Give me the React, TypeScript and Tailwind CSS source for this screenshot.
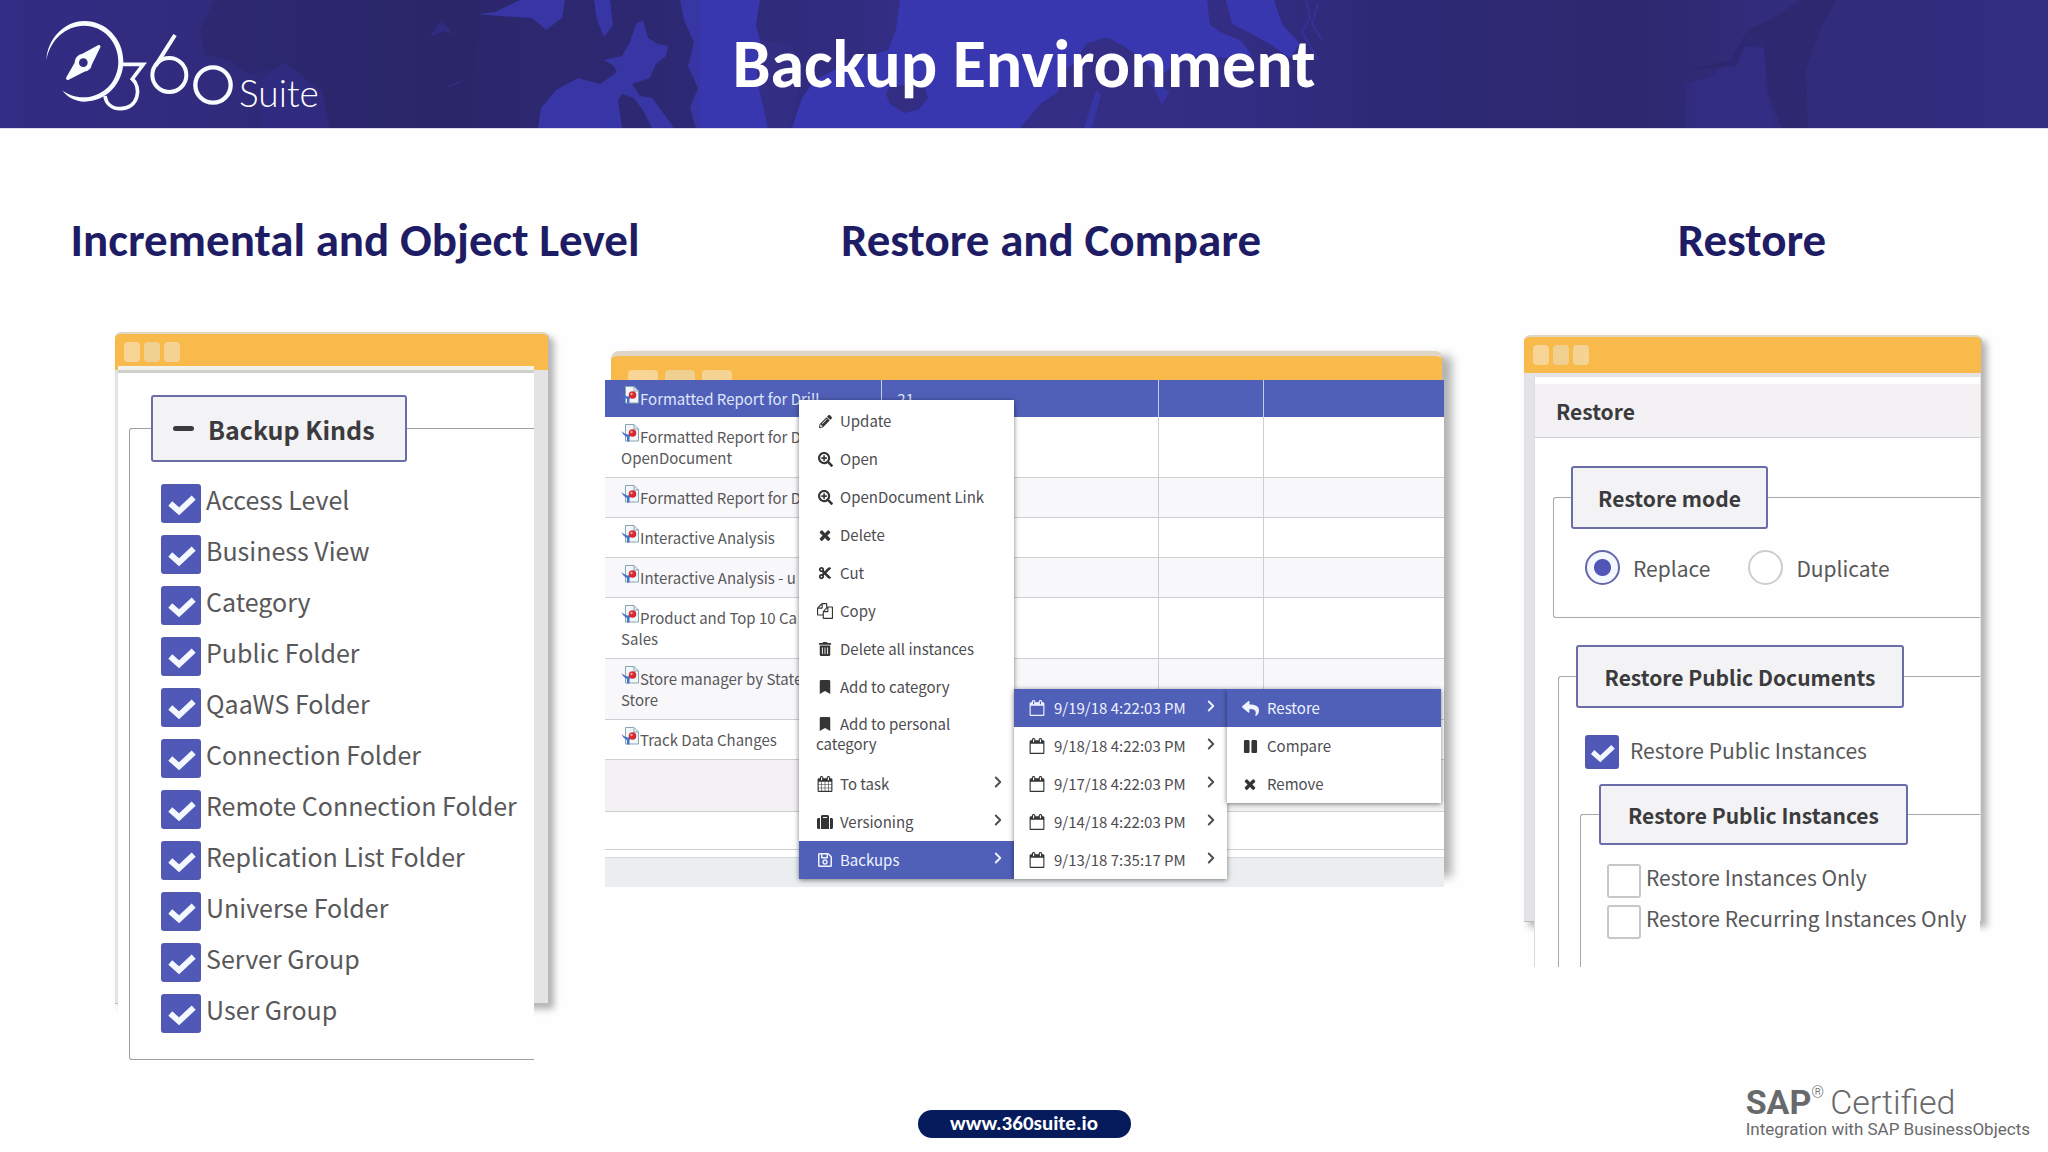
import type { ReactNode } from 'react';
import { ChevronRight } from 'lucide-react';
import { FaBookmark, FaCut, FaPause, FaPencilAlt, FaRegSave, FaReply, FaSearchPlus, FaSuitcase, FaTrashAlt } from 'react-icons/fa';

const backupKinds = [
  'Access Level',
  'Business View',
  'Category',
  'Public Folder',
  'QaaWS Folder',
  'Connection Folder',
  'Remote Connection Folder',
  'Replication List Folder',
  'Universe Folder',
  'Server Group',
  'User Group',
];

const reports = [
  ['Formatted Report for Drill', 'OpenDocument'],
  ['Formatted Report for Drill'],
  ['Interactive Analysis'],
  ['Interactive Analysis - u'],
  ['Product and Top 10 Ca', 'Sales'],
  ['Store manager by State', 'Store'],
  ['Track Data Changes'],
];

const backups = ['9/19/18 4:22:03 PM', '9/18/18 4:22:03 PM', '9/17/18 4:22:03 PM', '9/14/18 4:22:03 PM', '9/13/18 7:35:17 PM'];

function Glyph({ d }: { d: string }) {
  return (
    <svg className="h-4 w-4" viewBox="0 0 1792 1792" fill="currentColor">
      <path d={d} />
    </svg>
  );
}

const TimesIcon = () => (
  <Glyph d="M1490 1322q0 40-28 68l-136 136q-28 28-68 28t-68-28l-294-294-294 294q-28 28-68 28t-68-28l-136-136q-28-28-28-68t28-68l294-294-294-294q-28-28-28-68t28-68l136-136q28-28 68-28t68 28l294 294 294-294q28-28 68-28t68 28l136 136q28 28 28 68t-28 68l-294 294 294 294q28 28 28 68z" />
);

const CopyIcon = () => (
  <Glyph d="M1696 384q40 0 68 28t28 68v1216q0 40-28 68t-68 28h-960q-40 0-68-28t-28-68v-288h-544q-40 0-68-28t-28-68v-672q0-40 20-88t48-76l408-408q28-28 76-48t88-20h416q40 0 68 28t28 68v328q68-40 128-40h416zm-544 213l-299 299h299v-299zm-640-384l-299 299h299v-299zm196 647l316-316v-416h-384v416q0 40-28 68t-68 28h-416v640h512v-256q0-40 20-88t48-76zm956 804v-1152h-384v416q0 40-28 68t-68 28h-416v640h896z" />
);

const CalendarIcon = () => (
  <Glyph d="M192 1664h1408v-1024h-1408v1024zm384-1216v-288q0-14-9-23t-23-9h-64q-14 0-23 9t-9 23v288q0 14 9 23t23 9h64q14 0 23-9t9-23zm768 0v-288q0-14-9-23t-23-9h-64q-14 0-23 9t-9 23v288q0 14 9 23t23 9h64q14 0 23-9t9-23zm384-64v1280q0 52-38 90t-90 38h-1408q-52 0-90-38t-38-90v-1280q0-52 38-90t90-38h128v-96q0-66 47-113t113-47h64q66 0 113 47t47 113v96h384v-96q0-66 47-113t113-47h64q66 0 113 47t47 113v96h128q52 0 90 38t38 90z" />
);

const CalendarGridIcon = () => (
  <Glyph d="M192 1664h288v-288h-288v288zm352 0h320v-288h-320v288zm-352-352h288v-320h-288v320zm352 0h320v-320h-320v320zm-352-384h288v-288h-288v288zm736 736h320v-288h-320v288zm-384-736h320v-288h-320v288zm768 736h288v-288h-288v288zm-384-352h320v-320h-320v320zm-352-864v-288q0-13-9.5-22.5t-22.5-9.5h-64q-13 0-22.5 9.5t-9.5 22.5v288q0 13 9.5 22.5t22.5 9.5h64q13 0 22.5-9.5t9.5-22.5zm736 864h288v-320h-288v320zm-384-384h320v-288h-320v288zm384 0h288v-288h-288v288zm32-480v-288q0-13-9.5-22.5t-22.5-9.5h-64q-13 0-22.5 9.5t-9.5 22.5v288q0 13 9.5 22.5t22.5 9.5h64q13 0 22.5-9.5t9.5-22.5zm384-64v1280q0 52-38 90t-90 38h-1408q-52 0-90-38t-38-90v-1280q0-52 38-90t90-38h128v-96q0-66 47-113t113-47h64q66 0 113 47t47 113v96h384v-96q0-66 47-113t113-47h64q66 0 113 47t47 113v96h128q52 0 90 38t38 90z" />
);

function ReportIcon() {
  return (
    <svg className="-mt-1 inline-block h-[18px] w-[19px] align-[1px]" viewBox="0 0 19 18">
      <path d="M4.500 0.500h8.500l4.500 4.500v12h-13z" fill="#f1f6fb" stroke="#8aa5b2" />
      <path d="M13 0.500v4.500h4.500" fill="none" stroke="#8aa5b2" />
      <path d="M0.500 7c3 3 6 4 10 3l-2 3v4.500H6V13C3.500 12 1.500 10 0.500 7z" fill="#4472cf" />
      <circle cx="11.500" cy="9" r="3.800" fill="#d42a30" />
      <circle cx="10.500" cy="8" r="1.200" fill="#f3a09c" />
    </svg>
  );
}

function Logo() {
  return (
    <div className="flex items-end gap-1 pl-[30px]" role="img" aria-label="360Suite">
      <svg className="h-[110px] w-[205px]" viewBox="0 0 615 330" fill="none" stroke="#f8fcff">
        <path d="M49 154C52 88 104 36 163 36c65 0 117 54 117 121s-52 121-117 121c-26 0-52-13-66-34 18 14 38 21 62 21 61 0 106-48 106-107S221 50 162 50C108 50 60 92 49 154z" fill="#f8fcff" stroke="none" />
        <path d="M204 109c5-3 9 1 7 6l-26 53c-2 12-10 18-22 20l-47 24c-6 3-9-2-7-7l25-44c1-16 10-24 23-27z" fill="#f8fcff" stroke="none" />
        <circle cx="160" cy="161" r="13" fill="#312c80" stroke="none" />
        <path d="M276 166h64l-33 44c28 24 20 89-36 89-28 0-43-17-46-38" strokeWidth="11" />
        <path d="M435 78l-58 92" strokeWidth="12" />
        <circle cx="418" cy="198" r="51" strokeWidth="12" />
        <circle cx="549" cy="228" r="53" strokeWidth="13" />
      </svg>
      <span className="pb-2 font-[Lato,sans-serif] text-[37px] leading-[37px] font-light">Suite</span>
    </div>
  );
}

function WorldMap() {
  return (
    <svg className="absolute inset-0 h-full w-full" viewBox="0 0 2048 128" preserveAspectRatio="none" aria-hidden="true">
      <defs>
        <linearGradient id="sea" x1="0" x2="1" y1="0" y2="0">
          <stop offset="0" stopColor="#322d84" />
          <stop offset="0.100" stopColor="#302b7c" />
          <stop offset="0.220" stopColor="#2c276c" />
          <stop offset="0.320" stopColor="#2d2872" />
          <stop offset="0.450" stopColor="#342e86" />
          <stop offset="0.600" stopColor="#332d84" />
          <stop offset="0.680" stopColor="#2e2975" />
          <stop offset="0.800" stopColor="#2d286e" />
          <stop offset="0.860" stopColor="#322c7c" />
          <stop offset="1" stopColor="#332d80" />
        </linearGradient>
      </defs>
      <path fill="url(#sea)" d="M0 0H2048V128H0z" />
      <path fill="#2a2566" opacity="0.500" d="M215 0L200 30L205 55L230 60L250 75L270 68L300 85L325 128H470L480 0z" />
      <path fill="#322d88" opacity="0.600" d="M262 80L285 62L300 75L322 90L330 128H262z" />
      <g fill="#3836a4">
        <path d="M478 14L495 12L520 0H565L562 18L546 30L532 18L500 16z" />
        <path opacity="0.400" d="M430 37L441 20L453 34L444 31zM438 90L462 80L458 84z" />
        <path d="M594 0H610L613 25L604 37L597 20z" />
        <path d="M636 24L643 20L648 38L658 44L668 46L666 56L656 64L650 78L632 84L640 96L652 98L664 114L674 128H652L644 112L634 98L622 94L618 100L622 128H538L541 108L556 90L578 78L600 84L617 72L614 66L604 60L622 56L630 42z" />
        <path d="M680 0H702V128H696L690 108L698 88L688 66L694 42L684 20z" />
      </g>
      <g fill="#3937b0">
        <path d="M700 0H760L756 25L762 48L757 75L764 100L768 128H700z" />
        <path d="M900 0H1207L1210 25L1222 33L1240 40L1252 55L1230 58L1200 56L1182 60L1160 76L1146 62L1124 46L1106 37L1086 44L1076 62L1062 72L1058 92L1040 104L1020 128H792L802 98L815 80L850 62L888 50L896 30z" />
        <path d="M1226 0H1274L1282 24L1300 44L1290 58L1270 44L1252 34L1232 24z" />
        <path opacity="0.700" d="M1096 90L1101 94L1092 128H1084zM1148 78L1170 92L1162 104z" />
      </g>
      <path fill="#332d84" d="M760 40L790 44L800 60L798 96L788 128H768L757 80zM890 86L924 84L928 98L918 110L904 113L890 104L886 94z" />
      <path fill="none" stroke="#3836a0" strokeWidth="2" opacity="0.700" d="M1306 0L1310 18L1302 32L1318 60M1318 4L1312 24L1322 40" />
      <path fill="#332e88" opacity="0.700" d="M1685 128L1686 84L1712 76L1738 50L1748 34L1764 40L1766 92L1776 128z" />
      <path fill="#28235f" opacity="0.400" d="M1690 70L1730 60L1748 30L1770 20L1800 0H1836L1820 30L1806 70L1808 128H1782L1768 92L1764 48L1745 46L1736 66z" />
    </svg>
  );
}

// browser chrome drawn behind each capture
function WindowFrame({ className, dots }: { className: string; dots: string }) {
  return (
    <div className={`[grid-area:1/1] overflow-hidden rounded-t-[6px] border-t-2 border-r border-b border-[#bdb9b4] border-t-[#dfd6c6] bg-[#e3e2e4] ${className}`}>
      <div className="flex h-9 items-center bg-[#f8ba4b]">
        <div className={dots}>
          <span className="rounded-[4px] bg-[#f8d596]" />
          <span className="rounded-[4px] bg-[#f0d090]" />
          <span className="rounded-[4px] bg-[#f5d395]" />
        </div>
      </div>
    </div>
  );
}

const smallDots = 'grid auto-cols-[16px] grid-flow-col grid-rows-[20px] gap-1 pl-[9px]';

function CheckRow({ label, checked, className, box }: { label: string; checked?: boolean; className: string; box: string }) {
  return (
    <label className={`flex items-center ${className}`}>
      <span className={`grid shrink-0 ${box}`}>
        <input
          type="checkbox"
          defaultChecked={checked}
          className="peer [grid-area:1/1] h-full w-full appearance-none rounded-[3px] border-2 border-[#c9c7c6] bg-white checked:border-[#5058b0] checked:bg-[#5159b8]"
        />
        <svg className="pointer-events-none invisible [grid-area:1/1] h-full w-full peer-checked:visible" viewBox="0 0 40 40" fill="none" stroke="#f4f9ff" strokeWidth="6">
          <polyline points="9,20 18,28 33,14" />
        </svg>
      </span>
      <span className="whitespace-nowrap">{label}</span>
    </label>
  );
}

const legendBox = 'flex items-center rounded-[3px] border-2 border-[#6a6da8] bg-[#f3f2f4] font-bold whitespace-nowrap text-[#3b3b3d]';

function BackupKindsPanel() {
  return (
    <section className="grid">
      <WindowFrame className="mb-[56px] shadow-[5px_5px_7px_rgba(0,0,0,0.3)]" dots={smallDots} />
      <div className="[grid-area:1/1] mt-[34px] mr-[15px] ml-[3px] overflow-hidden bg-[#fefefe]">
        <div className="h-[7px] border-b-[3px] border-[#cdd0cb] bg-[#f3f1ec]" />
        <fieldset className="mt-[22px] ml-[11px] rounded-l-[3px] border border-r-0 border-[#a0a0a0] pb-[26px] pl-[21px] text-[25px] leading-[28px] text-[#58585a]">
          <legend className={`${legendBox} h-[67px] w-[256px] gap-[14px] pl-5`}>
            <span className="h-[5px] w-[21px] rounded-sm bg-[#3b3b3d]" />
            Backup Kinds
          </legend>
          <div className="mt-[22px] ml-[10px] flex flex-col gap-3">
            {backupKinds.map((kind) => (
              <CheckRow key={kind} label={kind} checked box="h-[39px] w-[40px]" className="gap-[5px] [&>span+span]:pb-2.5" />
            ))}
          </div>
        </fieldset>
      </div>
    </section>
  );
}

function MenuItem({ icon, children, arrow, active }: { icon: ReactNode; children: ReactNode; arrow?: boolean; active?: boolean }) {
  return (
    <li>
      <button
        type="button"
        className={`flex h-[38px] w-full items-center whitespace-nowrap ${active ? 'bg-[#5060b8] text-[#eef2ff]' : ''}`}
      >
        <span className={`flex w-[18px] shrink-0 justify-center ${active ? '' : 'text-[#353537]'}`}>{icon}</span>
        <span>{children}</span>
        {arrow && <ChevronRight className="mr-[7px] mb-1 ml-auto h-[18px] w-[18px]" strokeWidth={2.5} />}
      </button>
    </li>
  );
}

function ContextMenu() {
  return (
    <div className="absolute top-[49px] left-[194px] flex items-end text-[15px] leading-5 text-[#4d4d50]">
      <ul className="w-[215px] bg-white pt-0.5 shadow-[0_1px_5px_rgba(0,0,0,0.5)] [&_button]:gap-1.5 [&_button]:pl-[17px]">
        <MenuItem icon={<FaPencilAlt size={13} />}>Update</MenuItem>
        <MenuItem icon={<FaSearchPlus size={15} />}>Open</MenuItem>
        <MenuItem icon={<FaSearchPlus size={15} />}>OpenDocument Link</MenuItem>
        <MenuItem icon={<TimesIcon />}>Delete</MenuItem>
        <MenuItem icon={<FaCut size={14} />}>Cut</MenuItem>
        <MenuItem icon={<CopyIcon />}>Copy</MenuItem>
        <MenuItem icon={<FaTrashAlt size={14} />}>Delete all instances</MenuItem>
        <MenuItem icon={<FaBookmark size={14} />}>Add to category</MenuItem>
        <li>
          <button type="button" className="h-[59px] w-full pb-1 text-left">
            <span className="flex items-center gap-1.5">
              <span className="flex w-[18px] justify-center text-[#353537]">
                <FaBookmark size={14} />
              </span>
              Add to personal
            </span>
            category
          </button>
        </li>
        <MenuItem icon={<CalendarGridIcon />} arrow>To task</MenuItem>
        <MenuItem icon={<FaSuitcase size={16} />} arrow>Versioning</MenuItem>
        <MenuItem icon={<FaRegSave size={16} />} arrow active>Backups</MenuItem>
      </ul>
      <div className="flex items-start [&_button]:gap-2 [&_button]:pl-[14px]">
        <ul className="w-[213px] bg-white shadow-[0_1px_5px_rgba(0,0,0,0.5)]">
          {backups.map((date, i) => (
            <MenuItem key={date} icon={<CalendarIcon />} arrow active={i === 0}>
              {date}
            </MenuItem>
          ))}
        </ul>
        <ul className="w-[214px] bg-white shadow-[0_1px_5px_rgba(0,0,0,0.5)]">
          <MenuItem icon={<FaReply size={17} />} active>Restore</MenuItem>
          <MenuItem icon={<FaPause size={15} />}>Compare</MenuItem>
          <MenuItem icon={<TimesIcon />}>Remove</MenuItem>
        </ul>
      </div>
    </div>
  );
}

function ComparePanel() {
  return (
    <section className="relative mt-[19px] grid self-start">
      <WindowFrame
        className="mr-px mb-[9px] ml-[6px] rounded-t-[8px] border-t-[5px] border-t-[#ddd3c8] shadow-[12px_2px_10px_-3px_rgba(0,0,0,0.3)]"
        dots="mt-3 grid auto-cols-[30px] grid-flow-col grid-rows-[20px] gap-[7px] pl-[17px]"
      />
      <div className="[grid-area:1/1] mt-[29px] bg-white">
        <table className="w-full table-fixed border-collapse text-left align-top text-[15px] leading-[21px] text-[#58585a]">
          <colgroup>
            <col className="w-[33%]" />
            <col className="w-[33%]" />
            <col className="w-[12.5%]" />
            <col />
          </colgroup>
          <thead>
            <tr className="h-[37px] bg-[#5060b8] text-[#dfe6fb] [&>*+*]:border-l [&>*+*]:border-[#c3cbee]">
              <th className="pl-4 font-normal whitespace-nowrap">
                <ReportIcon />
                Formatted Report for Drill
              </th>
              <th className="pl-[15px] font-normal">21</th>
              <td />
              <td />
            </tr>
          </thead>
          <tbody>
            {reports.map((lines, i) => (
              <tr key={i} className="border-b border-[#cfced1] even:bg-[#f8f7fa] [&>td+td]:border-l [&>td+td]:border-[#cfced1]">
                <td className="pt-[9px] pb-[9px] pl-4 whitespace-nowrap">
                  <ReportIcon />
                  {lines[0]}
                  {lines[1] && <span className="block">{lines[1]}</span>}
                </td>
                <td />
                <td />
                <td />
              </tr>
            ))}
          </tbody>
        </table>
        <div className="h-[52px] border-b border-[#cfced1] bg-[#f3f1f4]" />
        <div className="h-[38px] border-b border-[#cfced1]" />
        <div className="mt-[7px] h-[30px] border-t border-[#d5dadc] bg-[#eaeef0]" />
      </div>
      <ContextMenu />
    </section>
  );
}

function Radio({ label, checked }: { label: string; checked?: boolean }) {
  return (
    <label className="flex items-center gap-[13px]">
      <input
        type="radio"
        name="restore-mode"
        defaultChecked={checked}
        className="h-[35px] w-[35px] appearance-none rounded-full border-2 border-[#cfcdcc] bg-white checked:border-[#6468a8] checked:bg-[radial-gradient(circle,#5156b6_8px,#f4f7fe_9px)]"
      />
      {label}
    </label>
  );
}

function RestorePanel() {
  const smallBox = 'h-[34px] w-[34px]';

  return (
    <section className="mt-[3px] grid self-start pl-6">
      <WindowFrame className="mb-[45px] shadow-[5px_5px_7px_rgba(0,0,0,0.3)]" dots={smallDots} />
      <div className="[grid-area:1/1] mt-[42px] mr-[2px] ml-[10px] h-[590px] overflow-hidden border-l border-[#dcdcde] bg-[#fefefe] text-[21px] leading-[26px] text-[#58585a]">
        <h3 className="mt-[7px] flex h-[54px] items-center border-b border-[#cfced1] bg-[#f3f1f4] pl-[21px] font-bold text-[#3b3b3d]">Restore</h3>
        <fieldset className="mt-[28px] ml-[18px] rounded-l-[3px] border border-r-0 border-[#a8a8aa] pb-[32px] pl-[17px]">
          <legend className={`${legendBox} h-[63px] w-[197px] justify-center`}>Restore mode</legend>
          <div className="mt-[21px] ml-[14px] flex gap-[38px]">
            <Radio label="Replace" checked />
            <Radio label="Duplicate" />
          </div>
        </fieldset>
        <fieldset className="mt-[27px] ml-[23px] rounded-l-[3px] border border-r-0 border-[#a8a8aa] pb-10 pl-[17px]">
          <legend className={`${legendBox} h-[63px] w-[328px] justify-center`}>Restore Public Documents</legend>
          <div className="mt-[27px] ml-[9px]">
            <CheckRow label="Restore Public Instances" checked box={smallBox} className="gap-[11px] [&>span+span]:pb-1" />
          </div>
          <fieldset className="mt-[15px] ml-1 rounded-l-[3px] border border-r-0 border-[#a8a8aa] pb-10 pl-[18px]">
            <legend className={`${legendBox} h-[61px] w-[309px] justify-center`}>Restore Public Instances</legend>
            <div className="mt-[19px] ml-2 flex flex-col gap-[7px]">
              <CheckRow label="Restore Instances Only" box={smallBox} className="gap-[5px] [&>span+span]:pb-2" />
              <CheckRow label="Restore Recurring Instances Only" box={smallBox} className="gap-[5px] [&>span+span]:pb-2" />
            </div>
          </fieldset>
        </fieldset>
      </div>
    </section>
  );
}

export default function App() {
  return (
    <div className="flex min-h-screen flex-col overflow-x-hidden bg-[#fefefe] font-['Noto_Sans_CJK_SC',sans-serif]">
      <header className="relative h-[129px] border-b border-[#dcdcf4] text-white">
        <WorldMap />
        <div className="relative grid h-full grid-cols-[1fr_auto_1fr] items-center">
          <Logo />
          <h1 className="font-[Calibri,Carlito,Lato,sans-serif] text-[68px] leading-[72px] font-bold">Backup Environment</h1>
        </div>
      </header>
      <main>
        <div className="grid grid-cols-[710fr_682fr_656fr] pt-[83px] text-center font-[Calibri,Carlito,Lato,sans-serif] text-[47px] leading-[56px] font-bold whitespace-nowrap text-[#1e1c64]">
          <h2>Incremental and Object Level</h2>
          <h2>Restore and Compare</h2>
          <h2 className="pl-16">Restore</h2>
        </div>
        <div className="mt-16 grid grid-cols-[minmax(0,434fr)_minmax(0,839fr)_minmax(0,482fr)] items-start gap-14 pr-[66px] pl-[115px]">
          <BackupKindsPanel />
          <ComparePanel />
          <RestorePanel />
        </div>
      </main>
      <footer className="mt-auto grid grid-cols-[1fr_auto_1fr] items-end pb-[10px]">
        <a
          href="https://www.360suite.io"
          className="col-start-2 mb-1 flex h-7 w-[213px] items-center justify-center rounded-full bg-[#061b5c] font-[Calibri,Carlito,Lato,sans-serif] text-[21px] font-bold text-white"
        >
          www.360suite.io
        </a>
        <div className="justify-self-end pr-[18px] pb-[3px] font-[Roboto,sans-serif] text-[#68696b]">
          <p className="flex items-start text-[34px] leading-[34px] font-light">
            <strong className="font-bold">SAP</strong>
            <span className="pr-1.5 text-[16px] leading-4">®</span>
            Certified
          </p>
          <p className="text-[17px] leading-5">Integration with SAP BusinessObjects</p>
        </div>
      </footer>
    </div>
  );
}
